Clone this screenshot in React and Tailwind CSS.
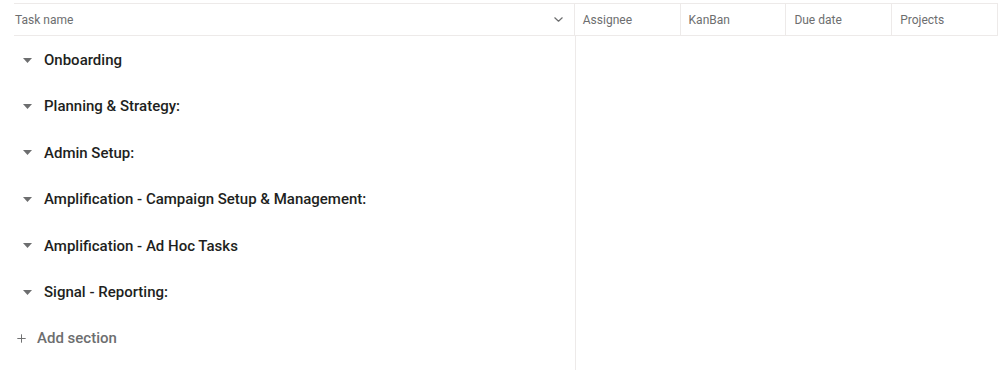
import React from 'react';
import { Plus } from 'lucide-react';

const sections = [
    'Onboarding',
    'Planning & Strategy:',
    'Admin Setup:',
    'Amplification - Campaign Setup & Management:',
    'Amplification - Ad Hoc Tasks',
    'Signal - Reporting:',
];

const columns = ['Assignee', 'KanBan', 'Due date', 'Projects'];

const Caret = () => (
    <svg width="9" height="5" viewBox="0 0 9 5" className="shrink-0">
        <path d="M0 0 L9 0 L4.5 5 Z" fill="#6d6e6f" />
    </svg>
);

const App = () => {
    return (
        <div className="w-[998px] h-[370px] bg-white pl-[14px] pt-[3px] overflow-hidden" style={{ fontFamily: 'Roboto, "Noto Sans", sans-serif' }}>
            {/* Header */}
            <div className="flex h-[33px] border-y border-[#edeae9] text-[12px] text-[#6d6e6f]">
                <div className="w-[562px] flex items-center justify-between border-r border-[#edeae9] pl-[1px] pr-[11px]">
                    <span>Task name</span>
                    <svg width="9" height="5" viewBox="0 0 9 5" fill="none">
                        <path d="M0.8 0.8 L4.5 4.2 L8.2 0.8" stroke="#6d6e6f" strokeWidth="1.2" strokeLinecap="round" strokeLinejoin="round" />
                    </svg>
                </div>
                {columns.map((c) => (
                    <div key={c} className="w-[106px] flex items-center px-[8px] border-r border-[#edeae9]">
                        {c}
                    </div>
                ))}
            </div>

            {/* Body */}
            <div className="flex">
                <div className="w-[562px] h-[334px] pt-[1px] border-r border-[#edeae9]">
                    {sections.map((s) => (
                        <div key={s} className="h-[46.4px] flex items-center pl-[9px] gap-[12px]">
                            <Caret />
                            <span className="text-[15px] font-medium text-[#1e1f21]">{s}</span>
                        </div>
                    ))}
                    <div className="h-[46.4px] flex items-center pl-[1px] gap-[9px] text-[#6d6e6f]">
                        <Plus className="w-[13px] h-[13px]" strokeWidth={1.8} />
                        <span className="text-[15px] font-medium">Add section</span>
                    </div>
                </div>
            </div>
        </div>
    );
};

export default App;
